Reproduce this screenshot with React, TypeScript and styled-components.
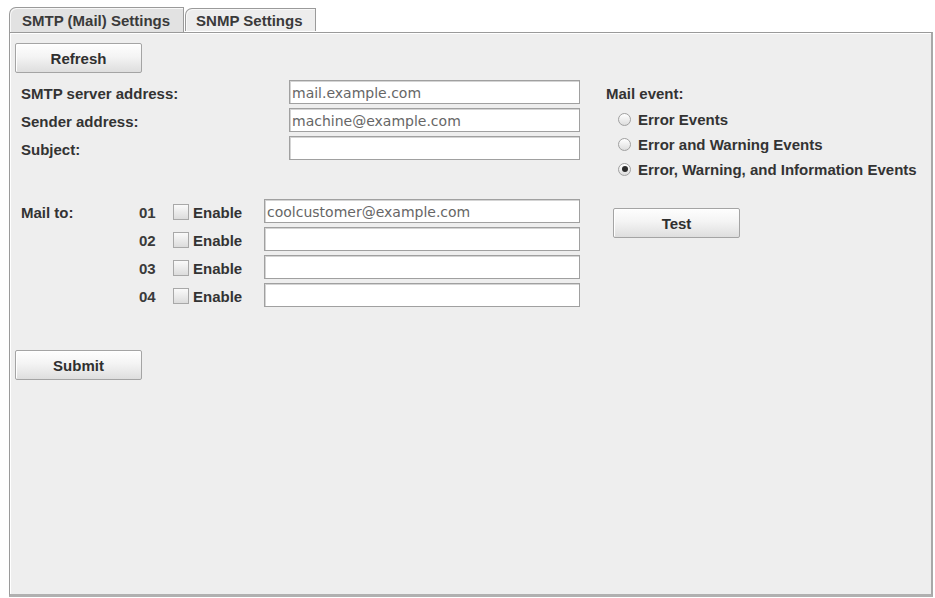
import { createGlobalStyle, styled } from 'styled-components'

const GlobalStyle = createGlobalStyle`
    html, body {
        margin: 0;
        padding: 0;
        background: #ffffff;
        font-family: "Liberation Sans", Arial, sans-serif;
    }
`

const mailTargets = [
    { num: '01', value: 'coolcustomer@example.com' },
    { num: '02', value: '' },
    { num: '03', value: '' },
    { num: '04', value: '' },
]

const mailEvents = [
    { label: 'Error Events', checked: false },
    { label: 'Error and Warning Events', checked: false },
    { label: 'Error, Warning, and Information Events', checked: true },
]

export default function App(){
    return(
        <Page>
            <GlobalStyle />
            <TabStrip>
                <Tab $active>SMTP (Mail) Settings</Tab>
                <Tab>SNMP Settings</Tab>
            </TabStrip>
            <Panel>
                <LeftColumn>
                    <Button>Refresh</Button>
                    <ServerGrid>
                        <GridLabel>SMTP server address:</GridLabel>
                        <Field defaultValue="mail.example.com" />
                        <GridLabel>Sender address:</GridLabel>
                        <Field defaultValue="machine@example.com" />
                        <GridLabel>Subject:</GridLabel>
                        <Field defaultValue="" />
                    </ServerGrid>
                    <MailToGrid>
                        <MailToLabel>Mail to:</MailToLabel>
                        <TargetList>
                            {mailTargets.map(t => (
                                <TargetRow key={t.num}>
                                    <Num>{t.num}</Num>
                                    <CheckLabel>
                                        <CheckBox />
                                        Enable
                                    </CheckLabel>
                                    <Field defaultValue={t.value} $width={316} />
                                </TargetRow>
                            ))}
                        </TargetList>
                    </MailToGrid>
                    <Button>Submit</Button>
                </LeftColumn>
                <RightColumn>
                    <Label>Mail event:</Label>
                    <RadioList>
                        {mailEvents.map(e => (
                            <RadioRow key={e.label}>
                                <Radio $checked={e.checked} />
                                {e.label}
                            </RadioRow>
                        ))}
                    </RadioList>
                    <TestButton>Test</TestButton>
                </RightColumn>
            </Panel>
        </Page>
    )
}

const Page = styled.div`
    display: flex;
    flex-direction: column;
    padding: 7px 2px 1px 9px;
    height: 598px;
    box-sizing: border-box;
    color: #333333;
    font-size: 15px;
    font-weight: 700;
`

const TabStrip = styled.div`
    display: flex;
    align-items: flex-end;
    height: 25px;
`

const Tab = styled.div<{ $active?: boolean }>`
    display: flex;
    align-items: center;
    height: ${p => p.$active ? 25 : 23}px;
    padding: 0 13px 0 ${p => p.$active ? 12 : 10}px;
    margin-right: 1px;
    box-sizing: border-box;
    border: 1px solid #9a9a9a;
    border-bottom: none;
    border-top-left-radius: 7px;
    background: ${p => p.$active ? '#e2e2e2' : '#ededed'};
    box-shadow: inset 1px 1px 0 #f8f8f8;
    color: #3a3a3a;
    font-size: 15px;
    margin-bottom: ${p => p.$active ? 0 : 1}px;
`

const Panel = styled.div`
    flex: 1;
    display: flex;
    border: 1px solid #9a9a9a;
    border-right: 2px solid #a8a8a8;
    border-bottom: 3px solid #b0b0b0;
    box-shadow: inset 1px 1px 0 #ffffff;
    background: #eeeeee;
    padding: 10px 0 0 5px;
`

const LeftColumn = styled.div`
    display: flex;
    flex-direction: column;
    align-items: flex-start;
    width: 565px;
`

const RightColumn = styled.div`
    display: flex;
    flex-direction: column;
    align-items: flex-start;
    padding: 42px 0 0 26px;
`

const Button = styled.div`
    display: flex;
    align-items: center;
    justify-content: center;
    width: 127px;
    height: 30px;
    box-sizing: border-box;
    border: 1px solid #a4a4a4;
    border-radius: 2px;
    background: linear-gradient(#fefefe, #f4f4f4 45%, #dedede);
    box-shadow: inset 1px 1px 0 #ffffff;
    color: #2f2f2f;
`

const TestButton = styled(Button)`
    margin-left: 7px;
`

const ServerGrid = styled.div`
    display: grid;
    grid-template-columns: 268px 291px;
    grid-auto-rows: 28px;
    align-items: center;
    padding: 5px 0 0 6px;
`

const Label = styled.span`
    color: #333333;
    line-height: 18px;
`

const GridLabel = styled(Label)`
    margin-top: 4px;
`

const MailToLabel = styled(Label)`
    line-height: 24px;
    padding-top: 2px;
`

const Field = styled.input<{ $width?: number }>`
    width: ${p => p.$width ?? 291}px;
    height: 24px;
    box-sizing: border-box;
    border: 1px solid #a0a0a0;
    box-shadow: inset 1px 1px 0 #d4d4d4;
    background: #ffffff;
    padding: 1px 2px 0;
    font-family: "DejaVu Sans", "Liberation Sans", sans-serif;
    font-size: 14px;
    font-weight: 400;
    color: #666666;
    outline: none;
`

const MailToGrid = styled.div`
    display: grid;
    grid-template-columns: 118px auto;
    align-items: start;
    padding: 37px 0 0 6px;
    margin-bottom: 43px;
`

const TargetList = styled.div`
    display: flex;
    flex-direction: column;
    gap: 4px;
`

const TargetRow = styled.div`
    display: flex;
    align-items: center;
`

const Num = styled.span`
    width: 34px;
    color: #3a3a3a;
    margin-top: 2px;
`

const CheckLabel = styled.label`
    display: flex;
    align-items: center;
    gap: 4px;
    width: 91px;
    margin-top: 2px;
    color: #333333;
`

const CheckBox = styled.span`
    width: 16px;
    height: 16px;
    box-sizing: border-box;
    border: 1px solid #a8a8a8;
    background: linear-gradient(#fafafa, #dcdcdc);
`

const RadioList = styled.div`
    display: flex;
    flex-direction: column;
    gap: 7px;
    padding: 7px 0 0 12px;
    margin-bottom: 30px;
`

const RadioRow = styled.label`
    display: flex;
    align-items: center;
    gap: 7px;
    height: 18px;
    color: #333333;
`

const Radio = styled.span<{ $checked: boolean }>`
    position: relative;
    width: 13px;
    height: 13px;
    box-sizing: border-box;
    border: 1px solid #a0a0a0;
    border-radius: 50%;
    background: linear-gradient(#ffffff, #dddddd);

    &::after {
        content: "";
        display: ${p => p.$checked ? 'block' : 'none'};
        position: absolute;
        left: 2.5px;
        top: 2.5px;
        width: 6px;
        height: 6px;
        border-radius: 50%;
        background: #2a2a2a;
    }
`
